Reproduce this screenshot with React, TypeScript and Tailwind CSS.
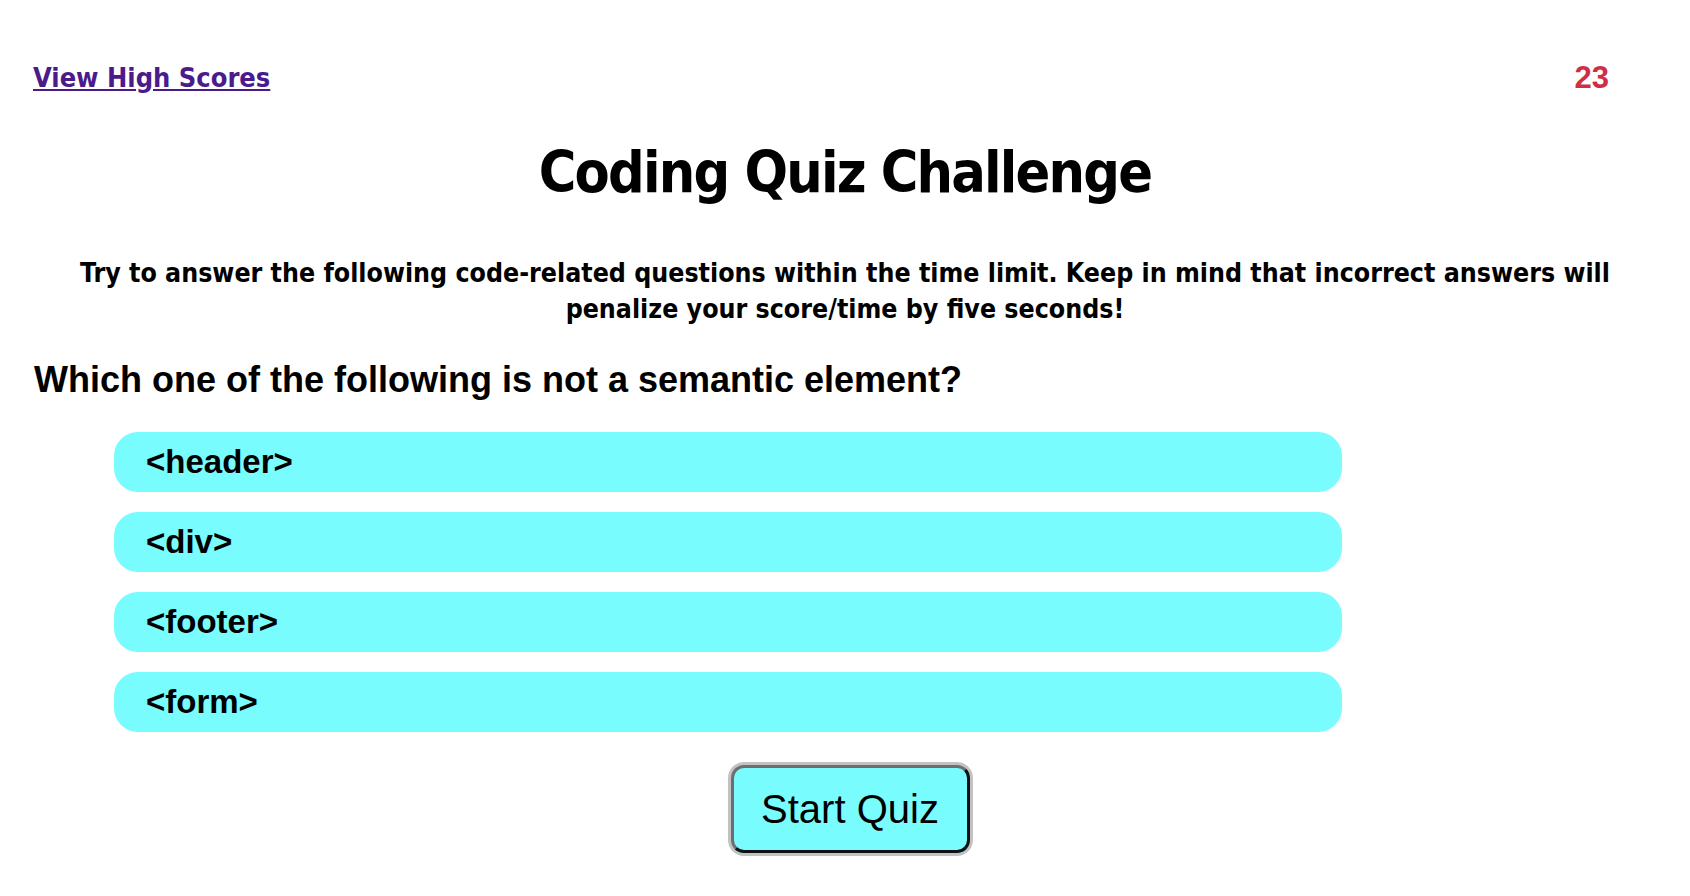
import React from "react"

const franklin = "font-['Liberation_Sans_Narrow','Arial_Narrow','DejaVu_Sans_Condensed',sans-serif]"
const arial = "font-['Liberation_Sans',Arial,sans-serif]"

const options = ["<header>", "<div>", "<footer>", "<form>"]

const App = () => {
  return (
    <div className={`min-h-[896px] bg-white text-black ${franklin}`}>
      <header className="flex items-center justify-between pl-[33px] pr-[81px] pt-[58px]">
        <a href="#" className="text-[27px] font-bold leading-[40px] text-[#4b1b8c] underline">
          View High Scores
        </a>
        <span className={`${arial} text-[31px] font-bold leading-[40px] text-[#cf2e45]`}>23</span>
      </header>

      <h1 className="mt-[36px] text-center text-[57px] font-bold leading-[76px] tracking-[-1.8px]">
        Coding Quiz Challenge
      </h1>

      <p className="mx-auto mt-[45px] max-w-[1560px] text-center text-[26.5px] font-bold leading-[36px]">
        Try to answer the following code-related questions within the time limit. Keep in mind that incorrect answers
        will penalize your score/time by five seconds!
      </p>

      <h2 className={`${arial} mt-[31px] pl-[34px] text-[36px] font-bold leading-[44px]`}>
        Which one of the following is not a semantic element?
      </h2>

      <ul className="mt-[30px] ml-[114px] flex w-[1228px] flex-col gap-[20px]">
        {options.map((opt) => (
          <li
            key={opt}
            className={`${arial} flex h-[60px] items-center rounded-[24px] bg-[#78fcfd] pl-[32px] text-[33px] font-bold`}
          >
            {opt}
          </li>
        ))}
      </ul>

      <div className="mt-[30px] flex justify-center pl-[10px]">
        <button className={`${arial} h-[94px] w-[245px] rounded-[16px] border-[3px] border-[#c2c2c2] bg-[#78fcfd] p-0 text-[40px]`}>
          <span className="flex h-full w-full items-center justify-center rounded-[13px] border-[3px] border-t-[#6e6e6e] border-l-[#6e6e6e] border-r-[#111] border-b-[#111]">
            Start Quiz
          </span>
        </button>
      </div>
    </div>
  )
}

export default App
